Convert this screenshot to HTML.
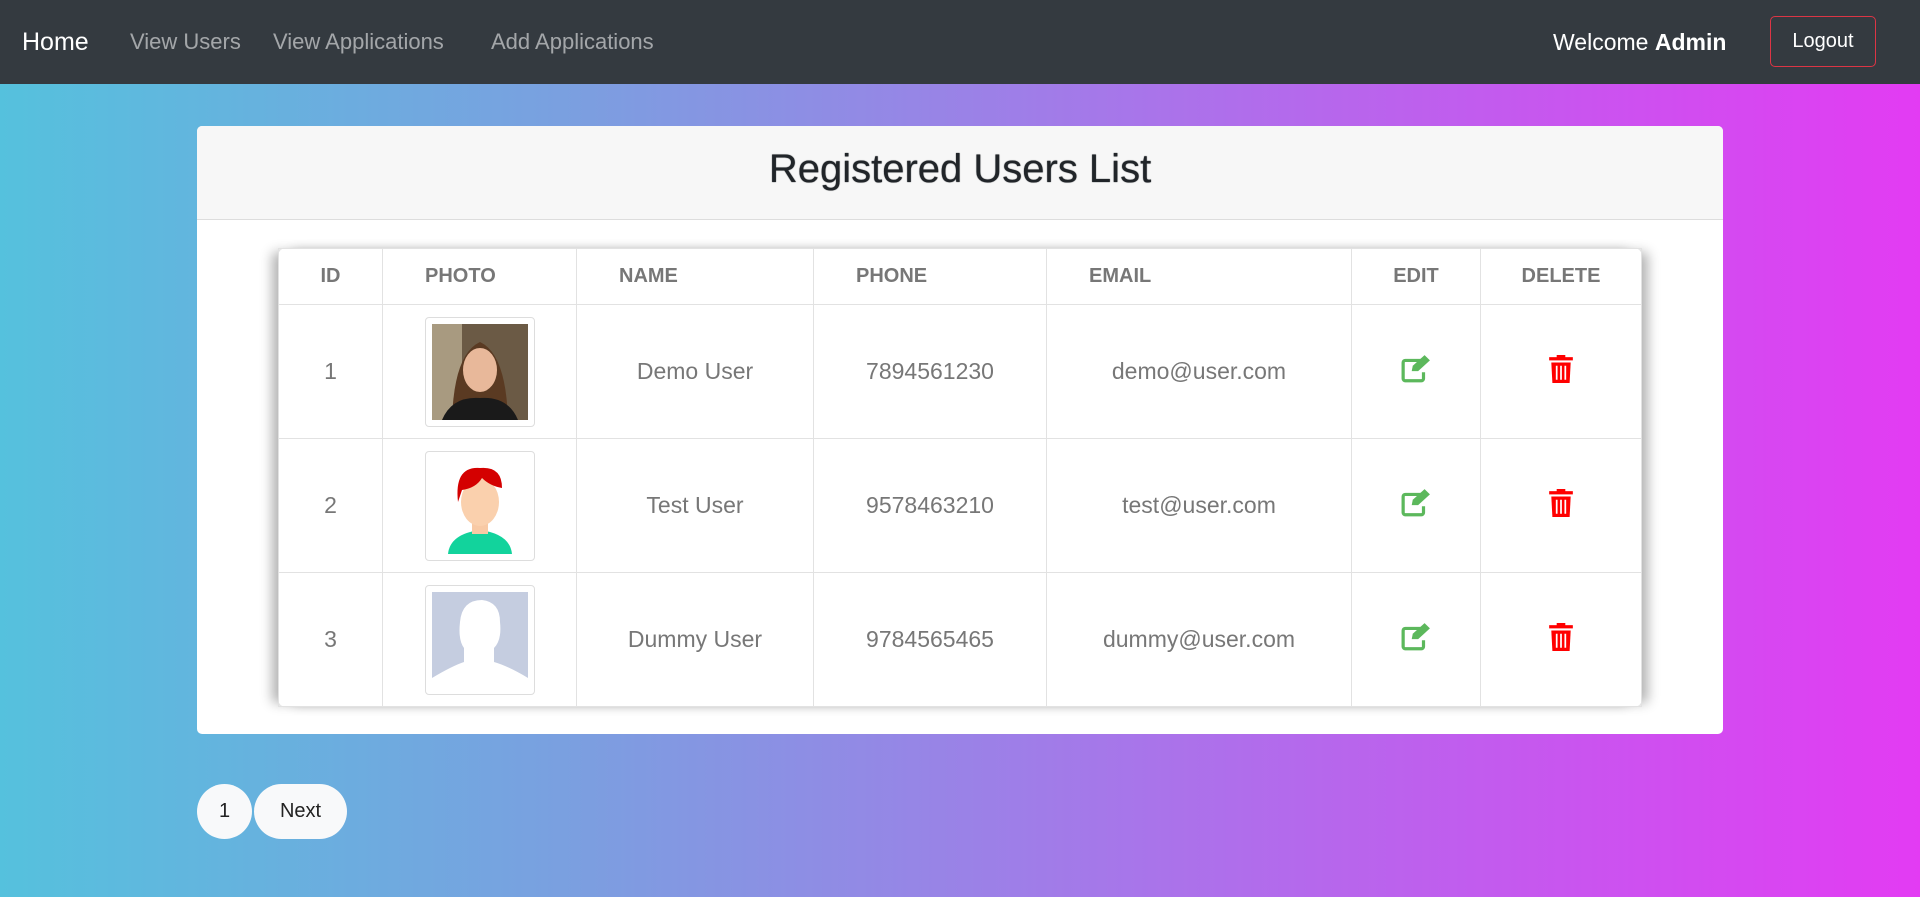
<!DOCTYPE html>
<html><head><meta charset="utf-8"><style>
*{box-sizing:border-box;margin:0;padding:0}
body{width:1920px;height:897px;overflow:hidden;font-family:"Liberation Sans",sans-serif;background:linear-gradient(90deg,#55c1dd 0%,#7b9fe0 30%,#a974ea 60%,#e33bf3 100%)}
.nav{position:absolute;top:0;left:0;width:1920px;height:84px;background:#343a40}
.nav span{position:absolute;top:0;line-height:84px;color:rgba(255,255,255,.55);font-size:22px}
.nav .home{left:22px;color:#fff;font-size:25px}
.logout{position:absolute;left:1770px;top:16px;width:106px;height:51px;border:1px solid #dc3545;border-radius:5px;color:#fff;font-size:20px;text-align:center;line-height:49px}
.card{position:absolute;left:197px;top:126px;width:1526px;height:608px;background:#fff;border-radius:5px}
.card .hd{height:94px;background:#f7f7f7;border-bottom:1px solid #ddd;border-radius:5px 5px 0 0;text-align:center;font-size:40px;line-height:86px;color:#212529;text-shadow:0 0 1px #212529}
table{position:absolute;left:81px;top:122px;width:1364px;height:457px;border-collapse:collapse;box-shadow:-10px 0 12px -4px rgba(0,0,0,.3),10px 0 12px -4px rgba(0,0,0,.3);border-radius:8px;background:#fff}
td,th{border:1px solid #e2e2e2;color:#777;text-align:center}
th{height:56px;font-size:20px;font-weight:bold}
td{height:134px;font-size:23px}
.ph{display:inline-block;width:110px;height:110px;border:1px solid #ddd;border-radius:4px;padding:6px;vertical-align:middle}
.pg{position:absolute;top:784px;height:55px;background:#f8f9fa;border-radius:28px;color:#222;font-size:20px;line-height:55px;text-align:center}
</style></head><body>
<div class="nav">
<span class="home">Home</span>
<span style="left:130px">View Users</span>
<span style="left:273px">View Applications</span>
<span style="left:491px">Add Applications</span>
<span style="left:1553px;color:#fff;font-size:23px">Welcome <b>Admin</b></span>
<div class="logout">Logout</div>
</div>
<div class="card">
<div class="hd">Registered Users List</div>
<table>
<tr><th style="width:104px">ID</th><th style="width:194px;text-align:left;padding-left:42px">PHOTO</th><th style="width:237px;text-align:left;padding-left:42px">NAME</th><th style="width:233px;text-align:left;padding-left:42px">PHONE</th><th style="width:305px;text-align:left;padding-left:42px">EMAIL</th><th style="width:129px">EDIT</th><th>DELETE</th></tr>
<tr><td>1</td><td><span class="ph"><svg width="96" height="96" viewBox="0 0 96 96"><rect width="96" height="96" fill="#6b5a45"/><rect width="30" height="96" fill="#a89a80"/><path d="M20 96 Q22 30 48 18 Q74 30 76 96Z" fill="#5a3a22"/><ellipse cx="48" cy="46" rx="17" ry="22" fill="#e8b89a"/><path d="M10 96 Q20 72 48 74 Q76 72 86 96Z" fill="#1a1a1a"/></svg></span></td><td>Demo User</td><td>7894561230</td><td>demo@user.com</td><td><svg width="30" height="28" viewBox="0 0 28 26"><path d="M19 5H4a2 2 0 0 0-2 2v15a2 2 0 0 0 2 2h15a2 2 0 0 0 2-2v-6" fill="none" stroke="#5cb85c" stroke-width="3"/><path d="M10 15l1-5L22 0l5 5-11 10z" fill="#5cb85c"/></svg></td><td><svg width="24" height="28" viewBox="0 0 22 26"><rect x="0" y="2" width="22" height="3" fill="#f00"/><rect x="7" y="0" width="8" height="3" fill="#f00"/><path d="M2 7h18l-1 19H3z" fill="#f00"/><path d="M7 10v13M11 10v13M15 10v13" stroke="#fff" stroke-width="1.6"/></svg></td></tr>
<tr><td>2</td><td><span class="ph"><svg width="96" height="96" viewBox="0 0 96 96"><rect width="96" height="96" fill="#fff"/><path d="M16 96 Q18 76 48 72 Q78 76 80 96Z" fill="#12d39c"/><rect x="40" y="58" width="16" height="18" fill="#f8c9a4"/><ellipse cx="48" cy="44" rx="19" ry="24" fill="#fad0ad"/><path d="M26 44 Q22 8 48 10 Q70 8 70 30 Q58 28 50 20 Q44 30 30 32Z" fill="#d40000"/></svg></span></td><td>Test User</td><td>9578463210</td><td>test@user.com</td><td><svg width="30" height="28" viewBox="0 0 28 26"><path d="M19 5H4a2 2 0 0 0-2 2v15a2 2 0 0 0 2 2h15a2 2 0 0 0 2-2v-6" fill="none" stroke="#5cb85c" stroke-width="3"/><path d="M10 15l1-5L22 0l5 5-11 10z" fill="#5cb85c"/></svg></td><td><svg width="24" height="28" viewBox="0 0 22 26"><rect x="0" y="2" width="22" height="3" fill="#f00"/><rect x="7" y="0" width="8" height="3" fill="#f00"/><path d="M2 7h18l-1 19H3z" fill="#f00"/><path d="M7 10v13M11 10v13M15 10v13" stroke="#fff" stroke-width="1.6"/></svg></td></tr>
<tr><td>3</td><td><span class="ph"><svg width="96" height="96" viewBox="0 0 96 96"><rect width="96" height="96" fill="#c5cde0"/><path d="M0 96V86Q20 74 32 70V56Q26 48 28 30Q30 8 50 8Q68 10 68 30Q70 48 62 56V70Q76 74 96 86V96Z" fill="#fff"/></svg></span></td><td>Dummy User</td><td>9784565465</td><td>dummy@user.com</td><td><svg width="30" height="28" viewBox="0 0 28 26"><path d="M19 5H4a2 2 0 0 0-2 2v15a2 2 0 0 0 2 2h15a2 2 0 0 0 2-2v-6" fill="none" stroke="#5cb85c" stroke-width="3"/><path d="M10 15l1-5L22 0l5 5-11 10z" fill="#5cb85c"/></svg></td><td><svg width="24" height="28" viewBox="0 0 22 26"><rect x="0" y="2" width="22" height="3" fill="#f00"/><rect x="7" y="0" width="8" height="3" fill="#f00"/><path d="M2 7h18l-1 19H3z" fill="#f00"/><path d="M7 10v13M11 10v13M15 10v13" stroke="#fff" stroke-width="1.6"/></svg></td></tr>
</table>
</div>
<div class="pg" style="left:197px;width:55px">1</div>
<div class="pg" style="left:254px;width:93px">Next</div>
</body></html>
